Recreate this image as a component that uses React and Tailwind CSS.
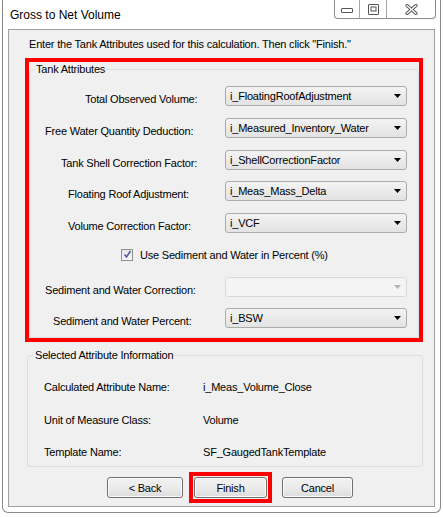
import React from "react";

const tankRows = [
  { label: "Total Observed Volume:", value: "i_FloatingRoofAdjustment", pad: "pl-[55px]" },
  { label: "Free Water Quantity Deduction:", value: "i_Measured_Inventory_Water", pad: "pl-[15px]" },
  { label: "Tank Shell Correction Factor:", value: "i_ShellCorrectionFactor", pad: "pl-[31px]" },
  { label: "Floating Roof Adjustment:", value: "i_Meas_Mass_Delta", pad: "pl-[38px]" },
  { label: "Volume Correction Factor:", value: "i_VCF", pad: "pl-[38px]" },
];

const infoRows = [
  ["Calculated Attribute Name:", "i_Meas_Volume_Close"],
  ["Unit of Measure Class:", "Volume"],
  ["Template Name:", "SF_GaugedTankTemplate"],
];

function Combo({ value, disabled }) {
  return (
    <div
      className={`flex h-[20px] w-[182px] items-center justify-between rounded-[3px] border pl-[4px] pr-[5px] ${
        disabled ? "border-[#d9d9d9] bg-[#f4f4f4]" : "border-[#acacac] bg-linear-to-b from-[#f3f3f3] to-[#e3e3e3]"
      }`}
    >
      <span className="leading-[14px]">{value}</span>
      <svg width="7" height="4" viewBox="0 0 7 4">
        <path d="M0 0h7L3.5 4z" fill={disabled ? "#b4b4b4" : "#000"} />
      </svg>
    </div>
  );
}

function Label({ children, pad }) {
  return <div className={`h-[20px] pt-[6px] leading-[14px] ${pad}`}>{children}</div>;
}

function WinButton({ children, width }) {
  return (
    <button
      className={`flex h-[21px] items-center justify-center rounded-[3px] border border-[#707070] bg-linear-to-b from-[#f2f2f2] via-[#ebebeb] to-[#dcdcdc] leading-[14px] text-black shadow-[inset_0_0_0_1px_#fbfbfb] ${width}`}
    >
      {children}
    </button>
  );
}

export default function App() {
  return (
    <div
      className="h-[517px] w-[443px] bg-white pb-[4px] pl-[2px] pr-[2px] text-[11px] tracking-[-0.2px] text-black"
      style={{ fontFamily: '"Liberation Sans", Arial, sans-serif' }}
    >
      <div className="flex h-full flex-col rounded-b-[6px] border-x border-b border-[#8a8a8a] bg-white">
        {/* title bar */}
        <div className="flex h-[29px] items-start justify-between">
          <div className="pl-[7px] pt-[8px] text-[12px] leading-[14px] tracking-normal text-black">Gross to Net Volume</div>
          <div className="mr-[4px] flex h-[19px] w-[102px] rounded-b-[4px] border-x border-b border-[#8b8b8b] bg-white">
            <div className="flex w-[25px] items-center justify-center border-r border-[#a8a8a8] pt-[3px]">
              <svg width="12" height="5" viewBox="0 0 12 5">
                <rect x="0.5" y="0.5" width="11" height="4" rx="0.5" fill="#fff" stroke="#555" />
              </svg>
            </div>
            <div className="flex w-[27px] items-center justify-center border-r border-[#a8a8a8]">
              <svg width="11" height="11" viewBox="0 0 11 11">
                <rect x="0.5" y="0.5" width="10" height="10" rx="0.5" fill="#fff" stroke="#555" />
                <rect x="3" y="3" width="5" height="4" fill="none" stroke="#555" />
              </svg>
            </div>
            <div className="flex flex-1 items-center justify-center">
              <svg width="13" height="11" viewBox="0 0 13 11">
                <path d="M2 1.5l9 8M11 1.5l-9 8" stroke="#555" strokeWidth="3.2" strokeLinecap="round" />
                <path d="M2 1.5l9 8M11 1.5l-9 8" stroke="#fff" strokeWidth="1.3" strokeLinecap="round" />
              </svg>
            </div>
          </div>
        </div>

        {/* client area */}
        <div className="mx-[5px] flex h-[478px] flex-col border border-[#a0a0a0] bg-[#f0f0f0] pl-[16px] pt-[7px]">
          <p className="ml-[4px] leading-[14px]">
            Enter the Tank Attributes used for this calculation. Then click "Finish."
          </p>

          <div className="mt-[7px] w-[398px] border-4 border-[#ff0000]">
            <fieldset className="rounded-[3px] border border-[#d5dfe5] pb-[9px] pt-[10px]">
              <legend className="ml-[5px] px-[1px] leading-[14px]">Tank Attributes</legend>
              <div className="grid auto-rows-[20px] grid-cols-[195px_182px] gap-y-[11.75px]">
                {tankRows.map((row) => (
                  <React.Fragment key={row.label}>
                    <Label pad={row.pad}>{row.label}</Label>
                    <Combo value={row.value} />
                  </React.Fragment>
                ))}
                <div className="col-span-2 flex h-[20px] items-center pl-[91px]">
                  <div className="flex h-[12px] w-[12px] items-center justify-center border border-[#8e8f8f] bg-linear-to-b from-[#e6e6e6] to-[#f8f8f8]">
                    <svg width="9" height="9" viewBox="0 0 9 9">
                      <path d="M1.5 4.5l2 2.5L7.5 1" fill="none" stroke="#4a5f97" strokeWidth="1.6" />
                    </svg>
                  </div>
                  <span className="ml-[7px] leading-[14px]">Use Sediment and Water in Percent (%)</span>
                </div>
                <Label pad="pl-[15px]">Sediment and Water Correction:</Label>
                <Combo value="" disabled />
                <Label pad="pl-[23px]">Sediment and Water Percent:</Label>
                <Combo value="i_BSW" />
              </div>
            </fieldset>
          </div>

          <fieldset className="ml-[2px] mt-[6px] w-[396px] rounded-[3px] border border-[#d5dfe5] pb-[7px] pt-[18px]">
            <legend className="ml-[6px] px-[1px] leading-[14px]">Selected Attribute Information</legend>
            <div className="grid grid-cols-[159px_auto] gap-y-[18.5px] pl-[16px]">
              {infoRows.map(([label, value]) => (
                <React.Fragment key={label}>
                  <div className="leading-[14px]">{label}</div>
                  <div className="leading-[14px]">{value}</div>
                </React.Fragment>
              ))}
            </div>
          </fieldset>

          <div className="mt-[5px] flex items-center pl-[82px]">
            <WinButton width="w-[76px]">&lt; Back</WinButton>
            <div className="ml-[6px] border-4 border-[#ff0000] p-px">
              <WinButton width="w-[73px]">Finish</WinButton>
            </div>
            <div className="ml-[10px]">
              <WinButton width="w-[71px]">Cancel</WinButton>
            </div>
          </div>
        </div>
      </div>
    </div>
  );
}
